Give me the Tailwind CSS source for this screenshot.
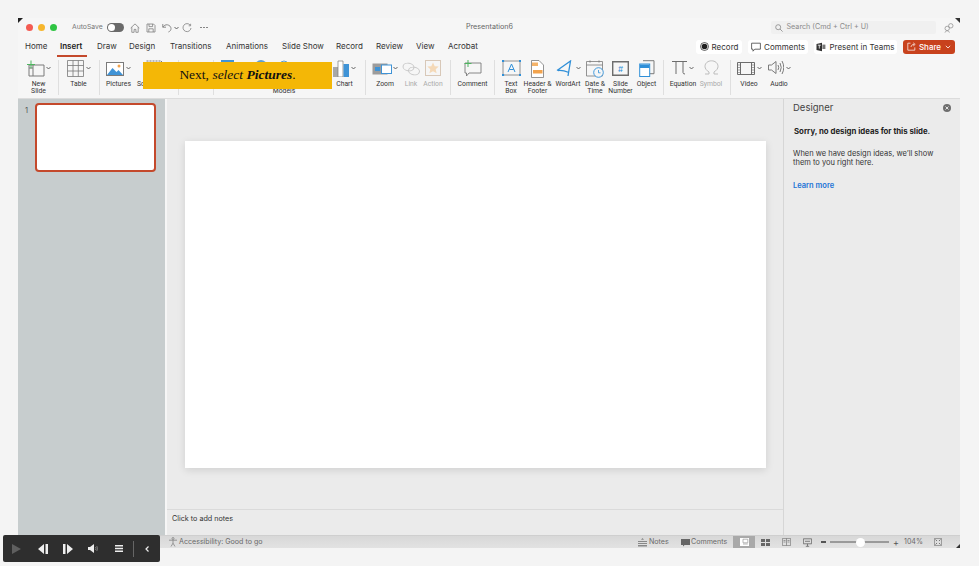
<!DOCTYPE html>
<html lang="en">
<head>
<meta charset="UTF-8">
<title>Presentation6</title>
<script src="https://cdn.jsdelivr.net/npm/@tailwindcss/browser@4"></script>
</head>
<body class="bg-[#f4f4f4] w-[979px] h-[566px] overflow-hidden relative font-['Inter',sans-serif] text-[#3c3c3c]">
<div class="absolute left-[18px] top-[18px] w-[942px] h-[530px] flex flex-col bg-[#f6f6f6]">

  <!-- title bar -->
  <div class="h-[19px] flex items-center shrink-0 pl-[8px] relative">
    <span class="w-[7px] h-[7px] rounded-full bg-[#f45b52]"></span>
    <span class="w-[7px] h-[7px] rounded-full bg-[#f6b62d] ml-[5px]"></span>
    <span class="w-[7px] h-[7px] rounded-full bg-[#2fc443] ml-[5px]"></span>
    <span class="text-[6.8px] text-[#777] ml-[15px] w-[30px] whitespace-nowrap">AutoSave</span>
    <span class="ml-[5px] w-[17px] h-[9px] rounded-full bg-[#6a6a6a] flex items-center pl-[1px]"><span class="w-[7px] h-[7px] rounded-full bg-white"></span></span>
    <svg class="ml-[6px]" width="10" height="10" viewBox="0 0 10 10" fill="none" stroke="#808080" stroke-width=".8"><path d="M.7 5 5 .9 9.3 5M1.8 4.2V9.3h2.3V6.4h1.8v2.9h2.3V4.2"/></svg>
    <svg class="ml-[6px]" width="10" height="10" viewBox="0 0 10 10" fill="none" stroke="#808080" stroke-width=".8"><path d="M1 1h6.5L9 2.5V9H1zM3 1v2.6h3.6V1M2.8 9V5.8h4.4V9"/></svg>
    <svg class="ml-[6px]" width="10" height="10" viewBox="0 0 10 10" fill="none" stroke="#808080" stroke-width=".9"><path d="M.8 1v3.2H4M.8 4.2C2 2.4 3.5 1.6 5.3 1.8 7.5 2.1 9 3.8 9 5.6 9 7.2 8 8.4 6.4 9"/></svg>
    <svg class="ml-[2px]" width="5" height="4" viewBox="0 0 5 4" fill="none" stroke="#555" stroke-width=".9"><path d="m.5 1 2 2 2-2"/></svg>
    <svg class="ml-[3px]" width="10" height="10" viewBox="0 0 10 10" fill="none" stroke="#808080" stroke-width=".8"><path d="M8.2 2.2A4 4 0 1 0 9 5M8.6.8v2H6.7"/></svg>
    <span class="ml-[8px] flex gap-[1.5px]"><span class="w-[1.5px] h-[1.5px] rounded-full bg-[#777]"></span><span class="w-[1.5px] h-[1.5px] rounded-full bg-[#777]"></span><span class="w-[1.5px] h-[1.5px] rounded-full bg-[#777]"></span></span>
    <span class="ml-[257px] w-[50px] text-center text-[7.2px] text-[#666] whitespace-nowrap">Presentation6</span>
    <div class="ml-[256px] w-[165px] h-[13px] rounded-[2px] bg-[#f0f0f0] flex items-center pl-[4px]">
      <svg width="8" height="8" viewBox="0 0 8 8" fill="none" stroke="#888" stroke-width=".8"><circle cx="3.2" cy="3.2" r="2.5"/><path d="m5 5 2.6 2.6"/></svg>
      <span class="ml-[4px] text-[7.2px] text-[#8a8a8a] whitespace-nowrap">Search (Cmd + Ctrl + U)</span>
    </div>
    <svg class="ml-[8px]" width="10" height="10" viewBox="0 0 10 10" fill="none" stroke="#888" stroke-width=".7"><circle cx="6.8" cy="2.8" r="2.2"/><circle cx="3.2" cy="5.4" r="2.2"/><path d="M1 9.6c.4-1.3 1.2-1.8 2.2-1.8s1.8.5 2.2 1.8"/></svg>
  </div>

  <!-- tabs -->
  <div class="h-[19px] flex items-center shrink-0 pl-[7px] text-[8px] text-[#333] whitespace-nowrap">
    <span class="w-[21px] mb-[2px]">Home</span>
    <span class="relative w-[23px] ml-[14px] mb-[2px] font-semibold text-[#222]">Insert<span class="absolute left-[-3px] top-[15px] w-[30px] h-[2px] bg-[#c4492c]"></span></span>
    <span class="w-[18px] ml-[14px] mb-[2px]">Draw</span>
    <span class="w-[26px] ml-[14px] mb-[2px]">Design</span>
    <span class="w-[41px] ml-[15px] mb-[2px]">Transitions</span>
    <span class="w-[41px] ml-[15px] mb-[2px]">Animations</span>
    <span class="w-[41px] ml-[15px] mb-[2px]">Slide Show</span>
    <span class="w-[27px] ml-[13px] mb-[2px]">Record</span>
    <span class="w-[26px] ml-[13px] mb-[2px]">Review</span>
    <span class="w-[18px] ml-[14px] mb-[2px]">View</span>
    <span class="w-[29px] ml-[14px] mb-[2px]">Acrobat</span>
    <div class="ml-[219px] w-[46px] h-[14px] rounded-[3px] bg-white flex items-center justify-center gap-[3px]">
      <svg width="9" height="9" viewBox="0 0 9 9"><circle cx="4.5" cy="4.5" r="4" fill="none" stroke="#222" stroke-width=".7"/><circle cx="4.5" cy="4.5" r="2.8" fill="#222"/></svg>Record
    </div>
    <div class="ml-[6px] w-[60px] h-[14px] rounded-[3px] bg-white flex items-center justify-center gap-[3px]">
      <svg width="10" height="10" viewBox="0 0 10 10" fill="none" stroke="#444" stroke-width=".8"><path d="M.6 1.2h8.8v6H3.800L2 9.2v-2H.6z"/></svg>Comments
    </div>
    <div class="ml-[6px] w-[83px] h-[14px] rounded-[3px] bg-white flex items-center justify-center gap-[3px]">
      <svg width="10" height="10" viewBox="0 0 10 10"><path d="M.5 2 6 .8v8.4L.5 8z" fill="#333"/><path d="M6.400 2.600h3v4.400h-3z" fill="#777"/><path d="M1.800 3.200h3M3.300 3.200v3.400" stroke="#fff" stroke-width=".8"/></svg>Present in Teams
    </div>
    <div class="ml-[6px] w-[52px] h-[14px] rounded-[3px] bg-[#c8421d] text-white flex items-center justify-center gap-[3px] font-medium">
      <svg width="9" height="9" viewBox="0 0 9 9" fill="none" stroke="#fff" stroke-width=".7"><path d="M3.500 1.200H.8v7h7V5.400M4 5c.2-1.600 1.400-2.600 3-2.600M6.200.8l2 1.600-2 1.600"/></svg>Share
      <svg class="ml-[1px]" width="6" height="4" viewBox="0 0 6 4" fill="none" stroke="#fff" stroke-width=".8"><path d="m.8.8 2.200 2.200L5.200.8"/></svg>
    </div>
  </div>

  <!-- ribbon -->
  <div class="h-[42px] flex items-start shrink-0 font-['Roboto',sans-serif] text-[6.8px] leading-[7px] text-[#333] text-center whitespace-nowrap pt-[4px]">
    <div class="ml-[8px] w-[25px] flex flex-col items-center">
      <div class="h-[19px] flex items-start gap-[1px]">
        <svg width="19" height="18" viewBox="0 0 19 18" fill="none"><path d="M3 5h15v11H3zM7 5v11M3 8h4" stroke="#7a7a7a" stroke-width="1"/><path d="M5 .5v8M1 4.500h8" stroke="#4fb560" stroke-width="1"/></svg>
        <svg class="mt-[6px]" width="5" height="4" viewBox="0 0 5 4" fill="none" stroke="#555" stroke-width=".9"><path d="m.5 1 2 2 2-2"/></svg>
      </div>
      <div class="mt-[2px]">New<br>Slide</div>
    </div>
    <div class="ml-[7px] w-px h-[35px] bg-[#dfdfdf]"></div>
    <div class="ml-[7px] w-[25px] flex flex-col items-center">
      <div class="h-[19px] flex items-start gap-[2px]">
        <svg width="17" height="17" viewBox="0 0 17 17" fill="none" stroke="#7a7a7a" stroke-width=".8"><path d="M.5.500h16v16H.5zM.5 5.500h16M.5 11h16M6 .5v16M11.300 .5v16"/></svg>
        <svg class="mt-[6px]" width="5" height="4" viewBox="0 0 5 4" fill="none" stroke="#555" stroke-width=".9"><path d="m.5 1 2 2 2-2"/></svg>
      </div>
      <div class="mt-[2px]">Table</div>
    </div>
    <div class="ml-[8px] w-px h-[35px] bg-[#dfdfdf]"></div>
    <div class="ml-[6px] w-[25px] flex flex-col items-center">
      <div class="h-[19px] flex items-start gap-[2px]">
        <svg width="18" height="14" class="mt-[2px]" viewBox="0 0 18 14"><rect x=".5" y=".5" width="17" height="13" fill="#fff" stroke="#7a7a7a"/><path d="M1 13 6.500 6l4 4 2-2 4.500 5z" fill="#3f93d6"/><circle cx="13" cy="4" r="1.500" fill="#f2a34d"/></svg>
        <svg class="mt-[6px]" width="5" height="4" viewBox="0 0 5 4" fill="none" stroke="#555" stroke-width=".9"><path d="m.5 1 2 2 2-2"/></svg>
      </div>
      <div class="mt-[2px]">Pictures</div>
    </div>
    <div class="ml-[5px] w-[36px] flex flex-col items-center">
      <div class="h-[19px]"><svg width="16" height="16" viewBox="0 0 16 16" fill="none" stroke="#7a7a7a" stroke-dasharray="2 1"><path d="M.5 1h15v12H.5z"/></svg></div>
      <div class="mt-[2px]">Screenshot</div>
    </div>
    <div class="ml-[6px] w-px h-[35px] bg-[#dfdfdf]"></div>
    <div class="ml-[34px] w-px h-[35px] bg-[#dfdfdf]"></div>
    <div class="ml-[7px] w-[13px] h-[16px] bg-[#3f93d6]"></div>
    <div class="ml-[21px] w-[12px] h-[14px] rounded-full bg-[#5e9fd4]"></div>
    <div class="ml-[4px] w-[26px] flex flex-col items-center">
      <div class="h-[19px]"><svg width="12" height="14" viewBox="0 0 12 14" fill="none" stroke="#5e9fd4"><circle cx="6" cy="5" r="4"/></svg></div>
      <div class="mt-[9px]">Models</div>
    </div>
    <div class="ml-[35px] w-[25px] flex flex-col items-center">
      <div class="h-[19px] flex items-start gap-[2px]">
        <svg width="16" height="17" viewBox="0 0 16 17"><path d="M0 7h5v10H0z" fill="#a8a8a8"/><path d="M5 1h5v16H5z" fill="#fff" stroke="#7a7a7a" stroke-width=".7"/><path d="M10.500 4H16v13h-5.500z" fill="#3f93d6"/></svg>
        <svg class="mt-[6px]" width="5" height="4" viewBox="0 0 5 4" fill="none" stroke="#555" stroke-width=".9"><path d="m.5 1 2 2 2-2"/></svg>
      </div>
      <div class="mt-[2px]">Chart</div>
    </div>
    <div class="ml-[8px] w-px h-[35px] bg-[#dfdfdf]"></div>
    <div class="ml-[6px] w-[26px] flex flex-col items-center">
      <div class="h-[19px] flex items-start gap-[1px]">
        <svg width="20" height="14" class="mt-[2px]" viewBox="0 0 20 14" fill="none"><path d="M.5 1.500h15v11H.5z" fill="#9c9c9c"/><path d="M3 5h5v4H3z" fill="#3f93d6"/><rect x="9.500" y="3" width="10" height="8.500" fill="#fff" stroke="#3f93d6"/></svg>
        <svg class="mt-[6px]" width="5" height="4" viewBox="0 0 5 4" fill="none" stroke="#555" stroke-width=".9"><path d="m.5 1 2 2 2-2"/></svg>
      </div>
      <div class="mt-[2px]">Zoom</div>
    </div>
    <div class="ml-[3px] w-[20px] flex flex-col items-center text-[#aaa]">
      <div class="h-[19px]"><svg width="18" height="14" class="mt-[2px]" viewBox="0 0 18 14" fill="none" stroke="#c8c8c8"><ellipse cx="6.500" cy="5" rx="5.500" ry="3.800" transform="rotate(10 6.500 5)"/><ellipse cx="12" cy="9" rx="5.500" ry="3.800" transform="rotate(10 12 9)"/></svg></div>
      <div class="mt-[2px]">Link</div>
    </div>
    <div class="ml-[2px] w-[20px] flex flex-col items-center text-[#aaa]">
      <div class="h-[19px]"><svg width="16" height="16" viewBox="0 0 16 16"><rect x=".5" y=".5" width="15" height="15" fill="none" stroke="#d8c8b8"/><path d="m8 2.500 1.700 3.700 4 .4-3 2.700.9 4L8 11.300l-3.600 2 .9-4-3-2.700 4-.4z" fill="#f4d9b8"/></svg></div>
      <div class="mt-[2px]">Action</div>
    </div>
    <div class="ml-[7px] w-px h-[35px] bg-[#dfdfdf]"></div>
    <div class="ml-[8px] w-[27px] flex flex-col items-center">
      <div class="h-[19px]"><svg width="19" height="17" viewBox="0 0 19 17" fill="none"><path d="M2 3h16v10H6l-2.500 3v-3H2z" stroke="#7a7a7a" stroke-width=".9"/><path d="M5 0v7M1.500 3.500h7" stroke="#4fb560"/></svg></div>
      <div class="mt-[2px]">Comment</div>
    </div>
    <div class="ml-[8px] w-px h-[35px] bg-[#dfdfdf]"></div>
    <div class="ml-[6px] w-[20px] flex flex-col items-center">
      <div class="h-[19px]"><svg width="19" height="16" viewBox="0 0 19 16" fill="none"><path d="M1 1h17v14H1z" stroke="#7a7a7a" stroke-width=".8"/><path d="M1 1h.1M18 1h.1M1 15h.1M18 15h.1" stroke="#2f8fd8" stroke-width="2" stroke-linecap="square"/><path d="m6 12 3.500-8 3.500 8M7.300 9.500h4.400" stroke="#2f8fd8"/></svg></div>
      <div class="mt-[2px]">Text<br>Box</div>
    </div>
    <div class="ml-[2px] w-[29px] flex flex-col items-center">
      <div class="h-[19px]"><svg width="13" height="18" viewBox="0 0 13 18"><path d="M.5.500H8L12.500 5v12.500H.5z" fill="#fff" stroke="#7a7a7a" stroke-width=".8"/><path d="M1 2.500h6V6H1z" fill="#f4b36a"/><path d="M2 10h9.500v3.500H2z" fill="#f2a34d"/></svg></div>
      <div class="mt-[2px]">Header &amp;<br>Footer</div>
    </div>
    <div class="ml-[2px] w-[28px] flex flex-col items-center">
      <div class="h-[19px] flex items-start gap-[2px]">
        <svg width="18" height="17" viewBox="0 0 18 17" fill="none" stroke="#2f8fd8" stroke-width="1.300"><path d="M1 10.500 14.500 1 12 16M2 10.500c3-.5 6 0 11 2"/></svg>
        <svg class="mt-[6px]" width="5" height="4" viewBox="0 0 5 4" fill="none" stroke="#555" stroke-width=".9"><path d="m.5 1 2 2 2-2"/></svg>
      </div>
      <div class="mt-[2px]">WordArt</div>
    </div>
    <div class="ml-[3px] w-[20px] flex flex-col items-center">
      <div class="h-[19px]"><svg width="18" height="18" viewBox="0 0 18 18" fill="none"><path d="M.5 1.500h16V16H.5zM.5 5h16" stroke="#7a7a7a" stroke-width=".8"/><path d="M4 .5v2M13 .5v2" stroke="#7a7a7a"/><circle cx="12.500" cy="12.500" r="4.800" fill="#f6f6f6" stroke="#2f8fd8" stroke-width=".9"/><path d="M12.500 10v2.800h2" stroke="#2f8fd8" stroke-width=".8"/></svg></div>
      <div class="mt-[2px]">Date &amp;<br>Time</div>
    </div>
    <div class="ml-[4px] w-[23px] flex flex-col items-center">
      <div class="h-[19px]"><svg width="17" height="15" class="mt-[1px]" viewBox="0 0 17 15" fill="none"><path d="M.7.700h15.600v13.600H.7z" stroke="#6d6d6d" stroke-width="1.400"/><text x="8.500" y="10.500" text-anchor="middle" font-size="8" font-family="Inter" fill="#2f8fd8">#</text></svg></div>
      <div class="mt-[2px]">Slide<br>Number</div>
    </div>
    <div class="ml-[3px] w-[23px] flex flex-col items-center">
      <div class="h-[19px]"><svg width="16" height="18" viewBox="0 0 16 18" fill="none"><path d="M4 .7h11v13H4" stroke="#7a7a7a"/><rect x=".7" y="4" width="10" height="12.500" fill="#fff" stroke="#2f8fd8"/><path d="M1 4.500h9.500V8H1z" fill="#2f8fd8"/></svg></div>
      <div class="mt-[2px]">Object</div>
    </div>
    <div class="ml-[5px] w-px h-[35px] bg-[#dfdfdf]"></div>
    <div class="ml-[6px] w-[26px] flex flex-col items-center">
      <div class="h-[19px] flex items-start gap-[2px]">
        <svg width="15" height="15" viewBox="0 0 15 15" fill="none" stroke="#6d6d6d"><path d="M0 1.500h15M4 1.500V14M11 1.500V12.500q0 1.500 2 1.500"/></svg>
        <svg class="mt-[6px]" width="5" height="4" viewBox="0 0 5 4" fill="none" stroke="#555" stroke-width=".9"><path d="m.5 1 2 2 2-2"/></svg>
      </div>
      <div class="mt-[2px]">Equation</div>
    </div>
    <div class="ml-[2px] w-[26px] flex flex-col items-center text-[#aaa]">
      <div class="h-[19px]"><svg width="15" height="15" viewBox="0 0 15 15" fill="none" stroke="#bdbdbd"><path d="M1 14h4v-2C2.500 10.500 1 8.500 1 6.500 1 3 4 .8 7.500.8S14 3 14 6.500c0 2-1.500 4-4 5.500v2h4"/></svg></div>
      <div class="mt-[2px]">Symbol</div>
    </div>
    <div class="ml-[6px] w-px h-[35px] bg-[#dfdfdf]"></div>
    <div class="ml-[5px] w-[26px] flex flex-col items-center">
      <div class="h-[19px] flex items-start gap-[2px]">
        <svg width="18" height="13" class="mt-[2px]" viewBox="0 0 18 13" fill="none" stroke="#6d6d6d"><path d="M.5.500h17v12H.5zM3.500.5v12M14.500.5v12"/><path d="M.5 3h3M.5 5.500h3M.5 8h3M.5 10.500h3M14.500 3h3M14.500 5.500h3M14.500 8h3M14.500 10.500h3" stroke-width=".6"/></svg>
        <svg class="mt-[6px]" width="5" height="4" viewBox="0 0 5 4" fill="none" stroke="#555" stroke-width=".9"><path d="m.5 1 2 2 2-2"/></svg>
      </div>
      <div class="mt-[2px]">Video</div>
    </div>
    <div class="ml-[5px] w-[24px] flex flex-col items-center">
      <div class="h-[19px] flex items-start gap-[2px]">
        <svg width="16" height="15" viewBox="0 0 16 15" fill="none" stroke="#6d6d6d" stroke-width=".9"><path d="M.5 5h3L8 1.500v12L3.500 10h-3zM10 5q1.500 2.500 0 5M12 3q2.500 4.500 0 9M14 1q3.500 6.500 0 13"/></svg>
        <svg class="mt-[6px]" width="5" height="4" viewBox="0 0 5 4" fill="none" stroke="#555" stroke-width=".9"><path d="m.5 1 2 2 2-2"/></svg>
      </div>
      <div class="mt-[2px]">Audio</div>
    </div>
  </div>

  <!-- main area -->
  <div class="flex-1 min-h-0 flex border-t border-[#dcdcdc]">
    <div class="w-[147px] bg-[#c7cdce] flex items-start pt-[4px] pl-[7px] shrink-0">
      <span class="text-[7.5px] text-[#555] w-[10px] mt-[2px]">1</span>
      <div class="w-[121px] h-[69px] rounded-[4px] border-2 border-[#c4492c] bg-white"></div>
    </div>
    <div class="w-[2px] bg-[#f6f6f6] shrink-0"></div>
    <div class="w-[616px] flex flex-col bg-[#ebebeb] shrink-0">
      <div class="flex-1 pl-[18px] pt-[42px]">
        <div class="w-[581px] h-[327px] bg-white shadow-[0_2px_8px_rgba(0,0,0,0.12)]"></div>
      </div>
      <div class="h-[26px] border-t border-[#dadada] pl-[5px] pt-[3px] text-[7.2px] leading-[12px] text-[#333]">Click to add notes</div>
    </div>
    <div class="flex-1 bg-[#ebebeb] border-l border-[#d6d6d6] pl-[9px] pr-[9px] relative">
      <div class="text-[9.5px] text-[#444] mt-[2px]">Designer</div>
      <svg class="absolute right-[9px] top-[5px]" width="8" height="8" viewBox="0 0 8 8"><circle cx="4" cy="4" r="4" fill="#6e6e6e"/><path d="m2.500 2.500 3 3m0-3-3 3" stroke="#eee" stroke-width=".9"/></svg>
      <div class="text-[7.8px] font-bold text-[#222] mt-[11px] pl-[1px] whitespace-nowrap">Sorry, no design ideas for this slide.</div>
      <div class="text-[7.5px] leading-[9.5px] text-[#333] mt-[11px] whitespace-nowrap">When we have design ideas, we’ll show<br>them to you right here.</div>
      <div class="text-[7.5px] font-semibold text-[#1a73d6] mt-[12px]">Learn more</div>
    </div>
  </div>

  <!-- status bar -->
  <div class="h-[13px] shrink-0 bg-gradient-to-b from-[#d8d8d8] to-[#e2e2e2] border-t border-[#cfcfcf] flex items-center text-[7.1px] text-[#6a6a6a] whitespace-nowrap">
    <svg class="ml-[150px]" width="10" height="10" viewBox="0 0 10 10" fill="none" stroke="#777" stroke-width=".7"><circle cx="5" cy="1.500" r="1"/><path d="M1 3.200h8M5 3.200v3L3 9.500M5 6.200l2 3.300"/></svg>
    <span class="ml-[1px] w-[84px] pt-[1px]">Accessibility: Good to go</span>
    <svg class="ml-[375px]" width="9" height="9" viewBox="0 0 9 9" fill="#888"><path d="M4.500 0 6 1.800H3zM0 3h9v1H0zM0 5h9v1H0zM0 7h9v1.500H0z"/></svg>
    <span class="ml-[2px] w-[20px] pt-[1px]">Notes</span>
    <svg class="ml-[12px]" width="9" height="9" viewBox="0 0 9 9" fill="#666"><path d="M0 1h9v6H3.500L2 8.500V7H0z"/></svg>
    <span class="ml-[1px] w-[36px] pt-[1px]">Comments</span>
    <div class="ml-[6px] w-[22px] h-[12px] bg-[#a9a9a9] flex items-center justify-center"><svg width="9" height="8" viewBox="0 0 9 8"><path d="M0 0h9v8H0z" fill="#fff"/><path d="M3 1.200h4.800v3.600H3zM3 6h4.800" fill="none" stroke="#999" stroke-width=".7"/></svg></div>
    <svg class="ml-[6px]" width="9" height="7" viewBox="0 0 9 7" fill="#666"><path d="M0 0h4v3H0zM5 0h4v3H5zM0 4h4v3H0zM5 4h4v3H5z"/></svg>
    <svg class="ml-[12px]" width="9" height="8" viewBox="0 0 9 8" fill="none" stroke="#777" stroke-width=".7"><path d="M.4.400h8.200v7.200H.4zM4.500.4v7.200M1.500 2.500h2M1.500 4h2M5.500 2.500h2M5.500 4h2"/></svg>
    <svg class="ml-[12px]" width="9" height="9" viewBox="0 0 9 9" fill="none" stroke="#666" stroke-width=".8"><path d="M.4.800h8.200v5H.4zM4.500 5.800v2.400M2.800 8.300h3.400M2 3.300h5"/></svg>
    <span class="ml-[9px] w-[5px] h-[1.5px] bg-[#555]"></span>
    <div class="ml-[4px] w-[59px] h-[1.5px] bg-[#9a9a9a] relative"><span class="absolute left-[26px] top-[-3.5px] w-[9px] h-[9px] rounded-full bg-white"></span></div>
    <span class="ml-[4px] text-[#555] text-[9px] leading-none w-[6px]">+</span>
    <span class="ml-[5px] w-[20px] pt-[1px]">104%</span>
    <svg class="ml-[10px]" width="8" height="8" viewBox="0 0 8 8" fill="none" stroke="#777" stroke-width=".7"><path d="M.4.400h7.200v7.200H.4z"/><path d="M1.500 1.500 3 3M6.500 1.500 5 3M1.500 6.500 3 5M6.500 6.500 5 5" stroke-width="1"/></svg>
  </div>
</div>

<!-- window corner marks -->
<svg class="absolute left-[18px] top-[18px]" width="5" height="5" viewBox="0 0 5 5"><path d="M0 0h5L0 5z" fill="#222"/></svg>
<svg class="absolute left-[955px] top-[18px]" width="5" height="5" viewBox="0 0 5 5"><path d="M0 0h5v5z" fill="#333"/></svg>
<svg class="absolute left-[956px] top-[544px]" width="4" height="4" viewBox="0 0 4 4"><path d="M4 0v4H0z" fill="#333"/></svg>

<!-- instruction banner -->
<div class="absolute left-[143px] top-[62px] w-[189px] h-[27px] bg-[#f4b706] flex items-center justify-center text-[13.5px] text-[#111] font-['Liberation_Serif',serif]">
  <span>Next, <i>select</i> <b><i>Pictures</i></b>.</span>
</div>

<!-- player controls -->
<div class="absolute left-[3px] top-[535px] w-[157px] h-[27px] rounded-[2px] bg-[#2e2e2e] flex items-center">
  <svg class="ml-[9px]" width="9" height="10" viewBox="0 0 9 10"><path d="M0 0 9 5 0 10z" fill="#5f5f5f"/></svg>
  <svg class="ml-[17px]" width="10" height="10" viewBox="0 0 10 10" fill="#eee"><path d="M6 0v10L0 5zM7.500 0H10v10H7.500z"/></svg>
  <svg class="ml-[15px]" width="10" height="10" viewBox="0 0 10 10" fill="#eee"><path d="M0 0h2.500v10H0zM4 0v10l6-5z"/></svg>
  <svg class="ml-[15px]" width="10" height="9" viewBox="0 0 10 9" fill="none"><path d="M0 3h2L6 0v9L2 6H0z" fill="#eee"/><path d="M7.500 3q1 1.500 0 3M8.800 2q1.400 2.500 0 5" stroke="#999" stroke-width=".7"/></svg>
  <svg class="ml-[17px]" width="8" height="7" viewBox="0 0 8 7" fill="#eee"><path d="M0 0h8v1.500H0zM0 2.700h8v1.500H0zM0 5.500h8V7H0z"/></svg>
  <span class="ml-[10px] w-px h-[16px] bg-[#666]"></span>
  <svg class="ml-[11px]" width="4" height="6" viewBox="0 0 4 6" fill="none" stroke="#eee" stroke-width="1.200"><path d="M3.500.5 1 3l2.500 2.500"/></svg>
</div>
</body>
</html>
